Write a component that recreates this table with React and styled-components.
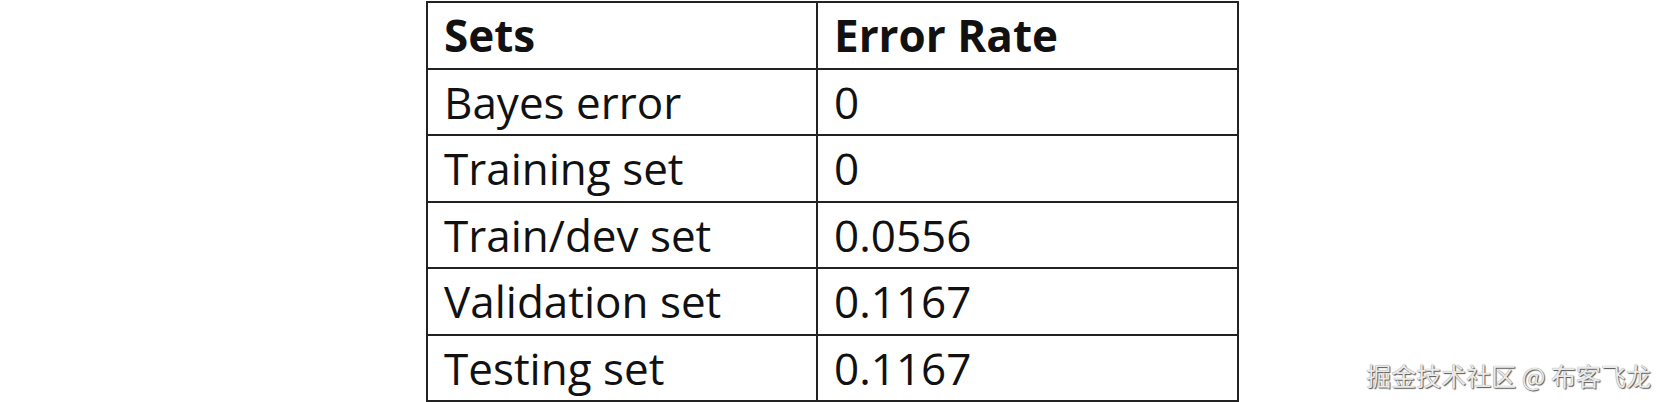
import React from 'react';
import styled, { createGlobalStyle } from 'styled-components';

const GlobalStyle = createGlobalStyle`
  html, body {
    margin: 0;
    padding: 0;
    background: #fff;
  }
`;

const Page = styled.div`
  position: relative;
  width: 1665px;
  height: 402px;
  overflow: hidden;
  background: #fff;
`;

const Table = styled.table`
  border-collapse: collapse;
  margin: 1px auto 0;
  width: 813px;
  font-family: "Open Sans", "Noto Sans", sans-serif;
  color: #111;
  table-layout: fixed;
`;

const Cell = styled.td`
  border: 2px solid #222;
  height: 64.5px;
  padding: 0 0 0 16px;
  font-size: 44px;
  font-weight: ${props => (props.$head ? 700 : 400)};
  line-height: 1;
  vertical-align: middle;
  white-space: nowrap;
  width: ${props => props.$width || 'auto'};
`;

const Watermark = styled.div`
  position: absolute;
  right: 14px;
  bottom: 9px;
  font-family: "Noto Sans CJK SC", "Noto Sans", sans-serif;
  font-size: 25px;
  color: #eaeaea;
  text-shadow: 1px 1px 1px #555, 0 0 1px #777;
  white-space: nowrap;
`;

const rows = [
  ['Bayes error', '0'],
  ['Training set', '0'],
  ['Train/dev set', '0.0556'],
  ['Validation set', '0.1167'],
  ['Testing set', '0.1167'],
];

const App = () => (
  <Page>
    <GlobalStyle />
    <Table>
      <tbody>
        <tr>
          <Cell $head $width="372px">Sets</Cell>
          <Cell $head>Error Rate</Cell>
        </tr>
        {rows.map(([name, rate]) => (
          <tr key={name}>
            <Cell>{name}</Cell>
            <Cell>{rate}</Cell>
          </tr>
        ))}
      </tbody>
    </Table>
    <Watermark>掘金技术社区 @ 布客飞龙</Watermark>
  </Page>
);

export default App;
